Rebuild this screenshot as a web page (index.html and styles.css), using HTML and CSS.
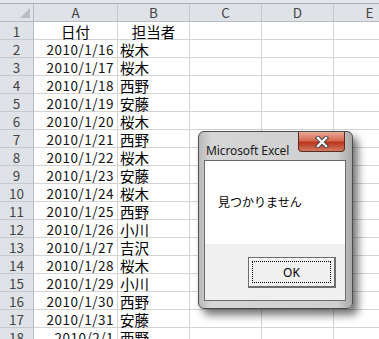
FILE: index.html
```html
<!DOCTYPE html>
<html lang="ja">
<head>
  <meta charset="UTF-8">
  <title>Microsoft Excel</title>
  <link rel="stylesheet" href="styles.css">
</head>
<body>

<div class="sheet">
  <div class="formula-edge"></div>

  <div class="grid">
    <div class="corner"><span class="tri"></span></div>
    <div class="col-h">A</div>
    <div class="col-h">B</div>
    <div class="col-h">C</div>
    <div class="col-h">D</div>
    <div class="col-h">E</div>

    <div class="row-h">1</div><div class="cell center">日付</div><div class="cell center">担当者</div><div class="cell"></div><div class="cell"></div><div class="cell"></div>
    <div class="row-h">2</div><div class="cell num">2010/1/16</div><div class="cell">桜木</div><div class="cell"></div><div class="cell"></div><div class="cell"></div>
    <div class="row-h">3</div><div class="cell num">2010/1/17</div><div class="cell">桜木</div><div class="cell"></div><div class="cell"></div><div class="cell"></div>
    <div class="row-h">4</div><div class="cell num">2010/1/18</div><div class="cell">西野</div><div class="cell"></div><div class="cell"></div><div class="cell"></div>
    <div class="row-h">5</div><div class="cell num">2010/1/19</div><div class="cell">安藤</div><div class="cell"></div><div class="cell"></div><div class="cell"></div>
    <div class="row-h">6</div><div class="cell num">2010/1/20</div><div class="cell">桜木</div><div class="cell"></div><div class="cell"></div><div class="cell"></div>
    <div class="row-h">7</div><div class="cell num">2010/1/21</div><div class="cell">西野</div><div class="cell"></div><div class="cell"></div><div class="cell"></div>
    <div class="row-h">8</div><div class="cell num">2010/1/22</div><div class="cell">桜木</div><div class="cell"></div><div class="cell"></div><div class="cell"></div>
    <div class="row-h">9</div><div class="cell num">2010/1/23</div><div class="cell">安藤</div><div class="cell"></div><div class="cell"></div><div class="cell"></div>
    <div class="row-h">10</div><div class="cell num">2010/1/24</div><div class="cell">桜木</div><div class="cell"></div><div class="cell"></div><div class="cell"></div>
    <div class="row-h">11</div><div class="cell num">2010/1/25</div><div class="cell">西野</div><div class="cell"></div><div class="cell"></div><div class="cell"></div>
    <div class="row-h">12</div><div class="cell num">2010/1/26</div><div class="cell">小川</div><div class="cell"></div><div class="cell"></div><div class="cell"></div>
    <div class="row-h">13</div><div class="cell num">2010/1/27</div><div class="cell">吉沢</div><div class="cell"></div><div class="cell"></div><div class="cell"></div>
    <div class="row-h">14</div><div class="cell num">2010/1/28</div><div class="cell">桜木</div><div class="cell"></div><div class="cell"></div><div class="cell"></div>
    <div class="row-h">15</div><div class="cell num">2010/1/29</div><div class="cell">小川</div><div class="cell"></div><div class="cell"></div><div class="cell"></div>
    <div class="row-h">16</div><div class="cell num">2010/1/30</div><div class="cell">西野</div><div class="cell"></div><div class="cell"></div><div class="cell"></div>
    <div class="row-h">17</div><div class="cell num">2010/1/31</div><div class="cell">安藤</div><div class="cell"></div><div class="cell"></div><div class="cell"></div>
    <div class="row-h">18</div><div class="cell num">2010/2/1</div><div class="cell">西野</div><div class="cell"></div><div class="cell"></div><div class="cell"></div>
  </div>

  <!-- メッセージボックス -->
  <div class="dialog">
    <div class="dialog-title">
      <span class="title-text">Microsoft Excel</span>
      <span class="close-btn">
        <svg width="14" height="12" viewBox="0 0 14 12">
          <path d="M3 2 L11 10 M11 2 L3 10" stroke="#3a3a3a" stroke-width="4.2" stroke-linecap="square" fill="none"/>
          <path d="M3 2 L11 10 M11 2 L3 10" stroke="#ffffff" stroke-width="2.4" stroke-linecap="square" fill="none"/>
        </svg>
      </span>
    </div>
    <div class="dialog-body">
      <div class="message">見つかりません</div>
      <div class="buttons">
        <div class="ok-btn"><span class="focus">OK</span></div>
      </div>
    </div>
  </div>
</div>

</body>
</html>
```

FILE: styles.css
```css
body {
  margin: 0;
  background-color: white;
  font-family: "Noto Sans CJK JP", sans-serif;
  overflow: hidden;
}
.sheet {
  position: relative;
  width: 379px;
  height: 339px;
  overflow: hidden;
}
.formula-edge {
  height: 3px;
  background-color: #e3e6ea;
  border-bottom: 1px solid #a9b0b8;
}
.grid {
  display: grid;
  grid-template-columns: 34px 84px 72px 72px 72px 72px;
  grid-auto-rows: 18px;
  font-size: 14.5px;
  color: #000;
}
.cell {
  box-sizing: border-box;
  border-right: 1px solid #d4d4d4;
  border-bottom: 1px solid #d4d4d4;
  line-height: 17px;
  padding: 1px 2px 0 2px;
  white-space: nowrap;
}
.cell.num {
  text-align: right;
  padding-right: 3px;
  font-size: 13.5px;
  letter-spacing: 0.5px;
  color: #111;
}
.cell.center {
  text-align: center;
}
.corner, .col-h, .row-h {
  box-sizing: border-box;
  background-color: #dfe3e8;
  border-right: 1px solid #b6bcc4;
  border-bottom: 1px solid #b6bcc4;
  color: #444;
  line-height: 17px;
  text-align: center;
  font-size: 13.5px;
}
.col-h {
  border-right-color: #c5cad1;
}
.row-h {
  border-bottom-color: #c5cad1;
  padding-top: 1px;
}
.corner {
  position: relative;
}
.tri {
  position: absolute;
  right: 3px;
  bottom: 3px;
  width: 0;
  height: 0;
  border-left: 10px solid transparent;
  border-bottom: 10px solid #b8bdc3;
}

/* ダイアログ */
.dialog {
  position: absolute;
  left: 198px;
  top: 131px;
  width: 155px;
  height: 178px;
  box-sizing: border-box;
  border: 1px solid #4c4c4c;
  border-radius: 6px;
  background: linear-gradient(to right, #b9b9b9, #d6d6d6 8%, #cfcfcf 90%, #a9a9a9);
  box-shadow: 5px 6px 9px rgba(0, 0, 0, 0.55);
  padding: 0 6px 7px 5px;
  display: flex;
  flex-direction: column;
}
.dialog-title {
  height: 28px;
  display: flex;
  align-items: flex-start;
  justify-content: space-between;
}
.title-text {
  font-family: "Noto Sans", sans-serif;
  font-size: 12px;
  color: #1a1a1a;
  margin: 10px 0 0 2px;
  letter-spacing: -0.1px;
}
.close-btn {
  width: 47px;
  height: 20px;
  margin-right: 1px;
  box-sizing: border-box;
  border: 1px solid #5a2a20;
  border-top: none;
  border-radius: 0 0 4px 4px;
  background: linear-gradient(to bottom, #e9a999, #d46a52 45%, #b8351c 55%, #d27a62);
  display: flex;
  align-items: center;
  justify-content: center;
}
.dialog-body {
  flex: 1;
  border: 1px solid #6a6a6a;
  background-color: #f0f0f0;
  display: flex;
  flex-direction: column;
}
.message {
  background-color: white;
  height: 83px;
  box-sizing: border-box;
  padding: 34px 0 0 13px;
  font-size: 12px;
  line-height: 14px;
  color: #000;
}
.buttons {
  display: flex;
  justify-content: flex-end;
  padding: 13px 9px 0 0;
}
.ok-btn {
  width: 88px;
  height: 31px;
  box-sizing: border-box;
  border: 1px solid #6e6e6e;
  border-right-width: 2px;
  border-bottom-width: 2px;
  background-color: #f0f0f0;
  box-shadow: inset 1px 1px 0 #ffffff;
  padding: 3px;
}
.focus {
  display: block;
  height: 100%;
  box-sizing: border-box;
  border: 1px dotted #000;
  text-align: center;
  font-family: "Noto Sans", sans-serif;
  font-size: 12px;
  line-height: 21px;
  color: #000;
}
```
